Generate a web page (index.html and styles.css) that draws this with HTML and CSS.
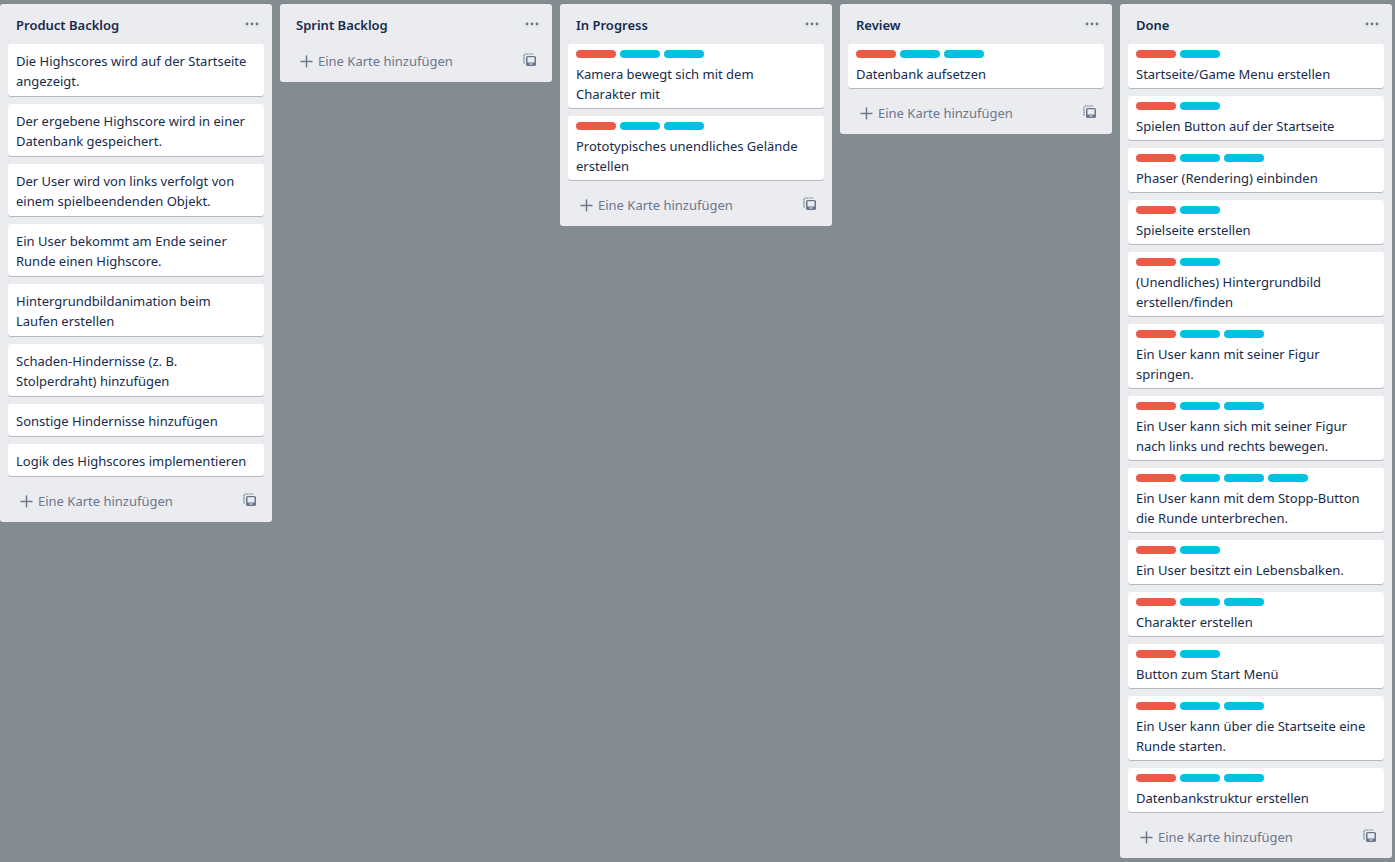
FILE: index.html
```html
<!DOCTYPE html>
<html lang="de">
<head>
  <meta charset="UTF-8" />
  <title>Board</title>
  <link rel="stylesheet" href="styles.css">
</head>
<body>
  <svg class="icon-defs" width="0" height="0">
    <symbol id="dots" viewBox="0 0 16 16">
      <circle cx="3" cy="8" r="1.4"/><circle cx="8" cy="8" r="1.4"/><circle cx="13" cy="8" r="1.4"/>
    </symbol>
    <symbol id="plus" viewBox="0 0 14 14">
      <path d="M6.2 0.5h1.600v5.700h5.700v1.600H7.800v5.700H6.200V7.800H0.500V6.200h5.700z"/>
    </symbol>
    <symbol id="template" viewBox="0 0 14 14">
      <path d="M1 10.500V2.500A1.500 1.500 0 0 1 2.500 1h8" fill="none" stroke-width="1.200" stroke-dasharray="1.600 .7"/>
      <path fill-rule="evenodd" d="M4.500 3h7A1.500 1.500 0 0 1 13 4.500v7a1.500 1.500 0 0 1-1.500 1.500h-7A1.500 1.500 0 0 1 3 11.500v-7A1.500 1.500 0 0 1 4.500 3zm0 1.300v5.200h7V4.300zm2 6.300v1h3v-1z"/>
    </symbol>
  </svg>

  <main class="board">

    <!-- Product Backlog -->
    <section class="list">
      <header class="list-head"><h2>Product Backlog</h2><svg class="dots"><use href="#dots"/></svg></header>
      <div class="cards">
        <article class="card"><p>Die Highscores wird auf der Startseite angezeigt.</p></article>
        <article class="card"><p>Der ergebene Highscore wird in einer Datenbank gespeichert.</p></article>
        <article class="card"><p>Der User wird von links verfolgt von einem spielbeendenden Objekt.</p></article>
        <article class="card"><p>Ein User bekommt am Ende seiner Runde einen Highscore.</p></article>
        <article class="card"><p>Hintergrundbildanimation beim Laufen erstellen</p></article>
        <article class="card"><p>Schaden-Hindernisse (z. B. Stolperdraht) hinzufügen</p></article>
        <article class="card"><p>Sonstige Hindernisse hinzufügen</p></article>
        <article class="card"><p>Logik des Highscores implementieren</p></article>
      </div>
      <footer class="list-foot"><svg class="plus"><use href="#plus"/></svg><span class="add">Eine Karte hinzufügen</span><svg class="template"><use href="#template"/></svg></footer>
    </section>

    <!-- Sprint Backlog -->
    <section class="list">
      <header class="list-head"><h2>Sprint Backlog</h2><svg class="dots"><use href="#dots"/></svg></header>
      <footer class="list-foot"><svg class="plus"><use href="#plus"/></svg><span class="add">Eine Karte hinzufügen</span><svg class="template"><use href="#template"/></svg></footer>
    </section>

    <!-- In Progress -->
    <section class="list">
      <header class="list-head"><h2>In Progress</h2><svg class="dots"><use href="#dots"/></svg></header>
      <div class="cards">
        <article class="card"><div class="labels"><i class="red"></i><i class="blue"></i><i class="blue"></i></div><p>Kamera bewegt sich mit dem Charakter mit</p></article>
        <article class="card"><div class="labels"><i class="red"></i><i class="blue"></i><i class="blue"></i></div><p>Prototypisches unendliches Gelände erstellen</p></article>
      </div>
      <footer class="list-foot"><svg class="plus"><use href="#plus"/></svg><span class="add">Eine Karte hinzufügen</span><svg class="template"><use href="#template"/></svg></footer>
    </section>

    <!-- Review -->
    <section class="list">
      <header class="list-head"><h2>Review</h2><svg class="dots"><use href="#dots"/></svg></header>
      <div class="cards">
        <article class="card"><div class="labels"><i class="red"></i><i class="blue"></i><i class="blue"></i></div><p>Datenbank aufsetzen</p></article>
      </div>
      <footer class="list-foot"><svg class="plus"><use href="#plus"/></svg><span class="add">Eine Karte hinzufügen</span><svg class="template"><use href="#template"/></svg></footer>
    </section>

    <!-- Done -->
    <section class="list">
      <header class="list-head"><h2>Done</h2><svg class="dots"><use href="#dots"/></svg></header>
      <div class="cards">
        <article class="card"><div class="labels"><i class="red"></i><i class="blue"></i></div><p>Startseite/Game Menu erstellen</p></article>
        <article class="card"><div class="labels"><i class="red"></i><i class="blue"></i></div><p>Spielen Button auf der Startseite</p></article>
        <article class="card"><div class="labels"><i class="red"></i><i class="blue"></i><i class="blue"></i></div><p>Phaser (Rendering) einbinden</p></article>
        <article class="card"><div class="labels"><i class="red"></i><i class="blue"></i></div><p>Spielseite erstellen</p></article>
        <article class="card"><div class="labels"><i class="red"></i><i class="blue"></i></div><p>(Unendliches) Hintergrundbild erstellen/finden</p></article>
        <article class="card"><div class="labels"><i class="red"></i><i class="blue"></i><i class="blue"></i></div><p>Ein User kann mit seiner Figur springen.</p></article>
        <article class="card"><div class="labels"><i class="red"></i><i class="blue"></i><i class="blue"></i></div><p>Ein User kann sich mit seiner Figur nach links und rechts bewegen.</p></article>
        <article class="card"><div class="labels"><i class="red"></i><i class="blue"></i><i class="blue"></i><i class="blue"></i></div><p>Ein User kann mit dem Stopp-Button die Runde unterbrechen.</p></article>
        <article class="card"><div class="labels"><i class="red"></i><i class="blue"></i></div><p>Ein User besitzt ein Lebensbalken.</p></article>
        <article class="card"><div class="labels"><i class="red"></i><i class="blue"></i><i class="blue"></i></div><p>Charakter erstellen</p></article>
        <article class="card"><div class="labels"><i class="red"></i><i class="blue"></i></div><p>Button zum Start Menü</p></article>
        <article class="card"><div class="labels"><i class="red"></i><i class="blue"></i><i class="blue"></i></div><p>Ein User kann über die Startseite eine Runde starten.</p></article>
        <article class="card"><div class="labels"><i class="red"></i><i class="blue"></i><i class="blue"></i></div><p>Datenbankstruktur erstellen</p></article>
      </div>
      <footer class="list-foot"><svg class="plus"><use href="#plus"/></svg><span class="add">Eine Karte hinzufügen</span><svg class="template"><use href="#template"/></svg></footer>
    </section>

  </main>
</body>
</html>
```

FILE: styles.css
```css
/* Reset and base styling */
* {
  margin: 0;
  padding: 0;
  box-sizing: border-box;
}

body {
  background: #838c91;
  color: #172b4d;
  font-family: 'Noto Sans', sans-serif;
  font-size: 13px;
  line-height: 20px;
  height: 100vh;
  overflow: hidden;
}

.icon-defs {
  position: absolute;
}

/* Board layout */
.board {
  display: flex;
  align-items: flex-start;
  gap: 8px;
  padding-top: 4px;
}

.list {
  width: 272px;
  flex: none;
  background: #ebecf0;
  border-radius: 3px;
}

/* List header */
.list-head {
  height: 40px;
  display: flex;
  align-items: center;
  justify-content: space-between;
  padding: 2px 12px 0 16px;
}

.list-head h2 {
  font-size: 13px;
  font-weight: 600;
  line-height: 20px;
  color: #172b4d;
}

.dots {
  width: 16px;
  height: 16px;
  fill: #6b778c;
  margin-top: -3px;
}

/* Cards */
.cards {
  display: flex;
  flex-direction: column;
  gap: 8px;
  padding: 0 8px 8px;
}

.card {
  background: #fff;
  border-radius: 3px;
  box-shadow: 0 1px 0 rgba(9, 30, 66, 0.25);
  padding: 7px 8px 5px;
}

.card:has(.labels) {
  padding-top: 6px;
  padding-bottom: 4px;
}

.labels {
  display: flex;
  gap: 4px;
  margin-bottom: 6px;
}

.labels i {
  display: block;
  width: 40px;
  height: 8px;
  border-radius: 4px;
}

.labels .red {
  background: #eb5a46;
}

.labels .blue {
  background: #00c2e0;
}

/* List footer */
.list-foot {
  height: 38px;
  display: flex;
  align-items: center;
  padding: 0 15px 4px 20px;
  color: #6b778c;
}

.plus {
  width: 13px;
  height: 13px;
  fill: #6b778c;
  margin-right: 5px;
}

.add {
  flex: 1;
}

.template {
  width: 14px;
  height: 14px;
  fill: #6b778c;
  stroke: #6b778c;
  stroke-width: 0;
  margin-top: -3px;
}
```
